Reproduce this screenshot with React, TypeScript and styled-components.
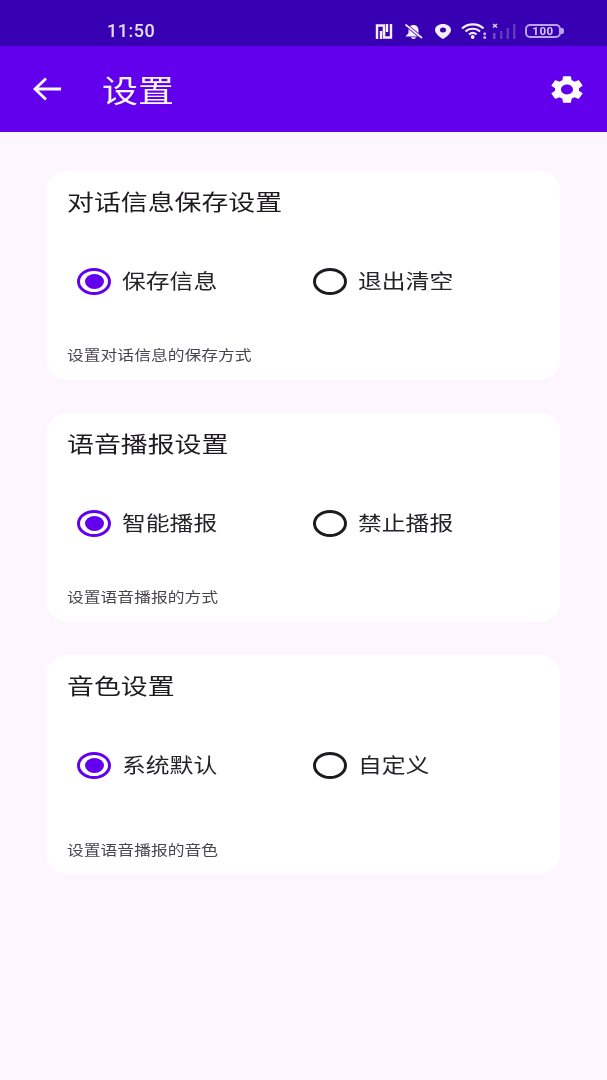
import * as React from 'react'
import styled, { createGlobalStyle } from 'styled-components'

const GlobalStyle = createGlobalStyle`
  html, body {
    margin: 0;
    padding: 0;
    background: #fdf6fe;
  }
  * {
    box-sizing: border-box;
  }
`

const Page = styled.div`
  width: 607px;
  height: 1080px;
  display: flex;
  flex-direction: column;
  background: #fdf6fe;
  font-family: 'Noto Sans CJK SC', 'Noto Sans', sans-serif;
  overflow: hidden;
  filter: blur(0.6px);
`

const StatusBar = styled.div`
  height: 46px;
  flex: none;
  display: flex;
  align-items: center;
  padding: 16px 46px 0 107px;
  background: #3700b3;
  color: #e6dcf8;
`

const Time = styled.span`
  font-family: Roboto, sans-serif;
  font-size: 18px;
  font-weight: 500;
  letter-spacing: 0.5px;
  line-height: 30px;
  margin-right: auto;
`

const StatusIcon = styled.svg<{ $gap: number }>`
  display: block;
  flex: none;
  margin-left: ${(p) => p.$gap}px;
`

const Battery = styled.div`
  position: relative;
  width: 36px;
  height: 14px;
  margin-left: 9px;
  border: 2px solid #b9a3ea;
  border-radius: 5px;
  display: flex;
  align-items: center;
  justify-content: center;
  font-family: Roboto, sans-serif;
  font-size: 11.5px;
  font-weight: 700;
  letter-spacing: 0.6px;
  color: #d8caf6;
  &::after {
    content: '';
    position: absolute;
    right: -5px;
    top: 2px;
    width: 3px;
    height: 6px;
    border-radius: 0 2px 2px 0;
    background: #b9a3ea;
  }
`

const AppBar = styled.header`
  height: 86px;
  flex: none;
  display: flex;
  align-items: center;
  padding: 0 20px 0 33px;
  background: #6200ee;
  color: #fff;
`

const AppTitle = styled.h1`
  margin: 0 0 0 41px;
  flex: 1;
  font-size: 36px;
  font-weight: 400;
  line-height: 50px;
  transform: scaleY(0.84);
  transform-origin: left center;
  color: #fbf7ff;
`

const Content = styled.main`
  display: flex;
  flex-direction: column;
  gap: 33.5px;
  padding: 39px 47px 0 47px;
`

const Card = styled.section`
  display: flex;
  flex-direction: column;
  padding: 15px 20px 15.5px;
  background: #fff;
  border-radius: 22px / 18px;
`

const CardTitle = styled.h2`
  margin: 0;
  font-size: 26.9px;
  font-weight: 400;
  line-height: 30px;
  white-space: nowrap;
  color: #1d1b20;
  transform: scaleY(0.82);
  transform-origin: left center;
`

const Options = styled.div`
  display: flex;
  height: 40px;
  margin: 45px 0 0 10px;
`

const Option = styled.label`
  width: 236px;
  flex: none;
  display: flex;
  align-items: center;
  gap: 11px;
`

const Radio = styled.span<{ $checked: boolean }>`
  width: 34px;
  height: 27px;
  flex: none;
  display: flex;
  align-items: center;
  justify-content: center;
  border: 3px solid ${(p) => (p.$checked ? '#6200ee' : '#1d1b20')};
  border-radius: 50%;
  &::after {
    content: '';
    display: ${(p) => (p.$checked ? 'block' : 'none')};
    width: 19px;
    height: 15px;
    border-radius: 50%;
    background: #6200ee;
  }
`

const OptionLabel = styled.span`
  font-size: 23.8px;
  line-height: 30px;
  white-space: nowrap;
  color: #25232a;
  transform: scaleY(0.84);
  transform-origin: left center;
`

const Caption = styled.p<{ $extra?: number }>`
  margin: ${(p) => 43 + (p.$extra ?? 0)}px 0 0;
  font-size: 16.8px;
  line-height: 20px;
  white-space: nowrap;
  color: #49454f;
  transform: scaleY(0.84);
  transform-origin: left center;
`

const sections = [
  { title: '对话信息保存设置', options: ['保存信息', '退出清空'], caption: '设置对话信息的保存方式', extra: 0 },
  { title: '语音播报设置', options: ['智能播报', '禁止播报'], caption: '设置语音播报的方式', extra: 0 },
  { title: '音色设置', options: ['系统默认', '自定义'], caption: '设置语音播报的音色', extra: 10.5 },
]

const GEAR =
  'M19.14 12.94c.04-.3.06-.61.06-.94 0-.32-.02-.64-.07-.94l2.03-1.58c.18-.14.23-.41.12-.61l-1.92-3.32c-.12-.22-.37-.29-.59-.22l-2.39.96c-.5-.38-1.03-.7-1.62-.94l-.36-2.54c-.04-.24-.24-.41-.48-.41h-3.84c-.24 0-.43.17-.47.41l-.36 2.54c-.59.24-1.13.57-1.62.94l-2.39-.96c-.22-.08-.47 0-.59.22L2.74 8.87c-.12.21-.08.47.12.61l2.03 1.58c-.05.3-.09.63-.09.94s.02.64.07.94l-2.03 1.58c-.18.14-.23.41-.12.61l1.92 3.32c.12.22.37.29.59.22l2.39-.96c.5.38 1.03.7 1.62.94l.36 2.54c.05.24.24.41.48.41h3.84c.24 0 .44-.17.47-.41l.36-2.54c.59-.24 1.13-.56 1.62-.94l2.39.96c.22.08.47 0 .59-.22l1.92-3.32c.12-.22.07-.47-.12-.61l-2.01-1.58zM12 15.6c-1.98 0-3.6-1.62-3.6-3.6s1.62-3.6 3.6-3.6 3.6 1.62 3.6 3.6-1.62 3.6-3.6 3.6z'

const App: React.FunctionComponent = () => (
  <Page>
    <GlobalStyle />
    <StatusBar>
      <Time>11:50</Time>
      {/* NFC */}
      <StatusIcon $gap={0} width="18" height="15" viewBox="0 0 18 15" fill="none" stroke="#f4eefd" strokeWidth="2.4">
        <path d="M2 15V1.500h7V11" />
        <path d="M6 15V7" />
        <path d="M16 0v13.500H9V4" />
        <path d="M12 0v8" />
      </StatusIcon>
      {/* Muted bell */}
      <StatusIcon $gap={11} width="19" height="15" viewBox="0 0 19 15">
        <path d="M9.500 1c3.300 0 5 2.300 5 5v3l3 3.500H1.500l3-3.500V6c0-2.700 1.700-5 5-5z" fill="#f4eefd" />
        <path d="M7 13.200h5c-.3 1.200-1.300 1.800-2.500 1.800S7.300 14.400 7 13.200z" fill="#f4eefd" />
        <path d="M2 1L18 14" stroke="#3700b3" strokeWidth="3.200" />
        <path d="M1.500 0.500L18 14" stroke="#f4eefd" strokeWidth="1.700" />
      </StatusIcon>
      {/* Location pin */}
      <StatusIcon $gap={12} width="16" height="15" viewBox="0 0 16 15">
        <path
          fillRule="evenodd"
          d="M8 0c4.400 0 8 2.400 8 6 0 3.500-4.500 7-8 9-3.500-2-8-5.500-8-9 0-3.600 3.600-6 8-6zm0 3.500a3 2.500 0 1 0 0 5a3 2.500 0 1 0 0-5z"
          fill="#f4eefd"
        />
      </StatusIcon>
      {/* Wifi with activity dots */}
      <StatusIcon $gap={10} width="26" height="16" viewBox="0 0 26 16" fill="none" stroke="#f4eefd" strokeWidth="2.200">
        <path d="M1 5.500C7 0 17 0 22.500 5.500" />
        <path d="M4.500 8.500C8.500 4.800 15 4.800 19 8.500" />
        <path d="M8 11.500c2.300-2 5.200-2 7.500 0" />
        <circle cx="11.700" cy="14" r="1.900" fill="#f4eefd" stroke="none" />
        <circle cx="23.700" cy="10.700" r="1.500" fill="#c4b1ee" stroke="none" />
        <circle cx="23.700" cy="14.500" r="1.500" fill="#c4b1ee" stroke="none" />
      </StatusIcon>
      {/* Empty signal */}
      <StatusIcon $gap={5} width="24" height="16" viewBox="0 0 24 16">
        <path d="M1 1l4 3.500M5 1L1 4.500" stroke="#e0d6f7" strokeWidth="1.500" />
        <rect x="1" y="10" width="2.500" height="6" fill="#6d4cc4" />
        <rect x="8" y="8" width="2.500" height="8" fill="#5f3bbd" />
        <rect x="14.500" y="5" width="2.500" height="11" fill="#5f3bbd" />
        <rect x="21" y="1" width="2.500" height="15" fill="#5f3bbd" />
      </StatusIcon>
      <Battery>100</Battery>
    </StatusBar>
    <AppBar>
      <svg width="28" height="24" viewBox="0 0 28 24" fill="none" stroke="#fbf7ff" strokeWidth="2.800">
        <path d="M28 12H2M13 1.500L2 12l11 10.500" />
      </svg>
      <AppTitle>设置</AppTitle>
      <svg width="40" height="33" viewBox="0 0 24 24" preserveAspectRatio="none" fill="#fff">
        <path d={GEAR} />
      </svg>
    </AppBar>
    <Content>
      {sections.map((section) => (
        <Card key={section.title}>
          <CardTitle>{section.title}</CardTitle>
          <Options>
            {section.options.map((option, i) => (
              <Option key={option}>
                <Radio $checked={i === 0} />
                <OptionLabel>{option}</OptionLabel>
              </Option>
            ))}
          </Options>
          <Caption $extra={section.extra}>{section.caption}</Caption>
        </Card>
      ))}
    </Content>
  </Page>
)

export default App
